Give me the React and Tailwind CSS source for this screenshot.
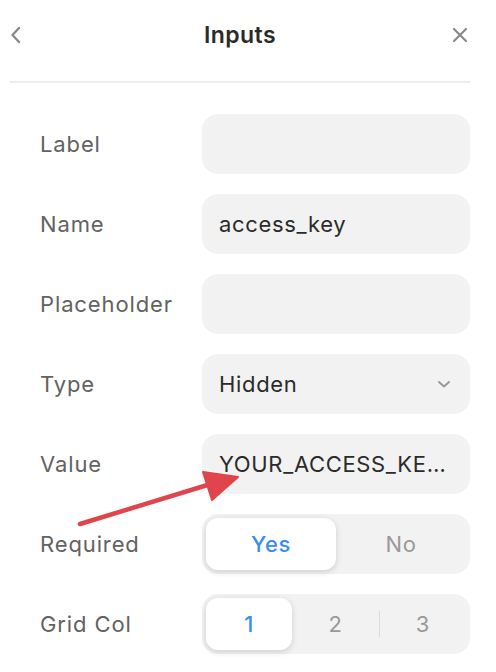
import React from 'react';

const font = { fontFamily: 'Inter, "Noto Sans", sans-serif' };

function Row({ label, children }) {
  return (
    <div className="flex items-center h-[60px]">
      <div className="w-[202px] pl-10 text-[22px] tracking-[0.04em] text-[#626262]">{label}</div>
      <div className="w-[268px]">{children}</div>
    </div>
  );
}

function Field({ value, chevron }) {
  return (
    <div className="h-[60px] rounded-[16px] bg-[#f2f2f2] flex items-center pl-[17px] pr-[18px] text-[22px] tracking-[0.03em] text-[#2b2b2b]">
      <span className="flex-1 truncate">{value}</span>
      {chevron && (
        <svg width="16" height="16" viewBox="0 0 16 16" fill="none" stroke="#999" strokeWidth="2" strokeLinecap="round" strokeLinejoin="round">
          <path d="M3 6l5 4.5L13 6" />
        </svg>
      )}
    </div>
  );
}

function Segmented({ options, active, dividers }) {
  return (
    <div className="h-[60px] rounded-[16px] bg-[#f2f2f2] p-1 flex items-center">
      {options.map((o, i) => (
        <React.Fragment key={o}>
          {dividers && i > 0 && i !== active && i - 1 !== active && (
            <div className="w-px h-[26px] bg-[#dcdcdc]" />
          )}
          <div
            className={
              'flex-1 h-[52px] rounded-[12px] flex items-center justify-center text-[22px] tracking-[0.03em] ' +
              (i === active
                ? 'bg-white text-[#3b8ef0] font-medium shadow-[0_2px_6px_rgba(0,0,0,0.15)]'
                : 'text-[#999]')
            }
          >
            {o}
          </div>
        </React.Fragment>
      ))}
    </div>
  );
}

export default function App() {
  return (
    <div className="relative w-[496px] h-[672px] bg-white overflow-hidden" style={font}>
      <header className="flex items-center justify-between h-[70px] pl-[10px] pr-[28px]">
        <svg width="12" height="18" viewBox="0 0 12 18" fill="none" stroke="#8a8a8a" strokeWidth="2.4" strokeLinecap="round" strokeLinejoin="round">
          <path d="M9 2L2.5 9L9 16" />
        </svg>
        <h1 className="text-[23px] font-semibold tracking-[0.02em] text-[#2b2b2b] ml-[6px]">Inputs</h1>
        <svg width="16" height="16" viewBox="0 0 16 16" fill="none" stroke="#8a8a8a" strokeWidth="2.2" strokeLinecap="round">
          <path d="M2 2L14 14M14 2L2 14" />
        </svg>
      </header>
      <div className="mx-[10px] w-[460px] h-[2px] bg-[#ececec] mt-[11px]" />
      <div className="flex flex-col gap-5 mt-[31px]">
        <Row label="Label"><Field value="" /></Row>
        <Row label="Name"><Field value="access_key" /></Row>
        <Row label="Placeholder"><Field value="" /></Row>
        <Row label="Type"><Field value="Hidden" chevron /></Row>
        <Row label="Value"><Field value="YOUR_ACCESS_KEY_HERE" /></Row>
        <Row label="Required"><Segmented options={['Yes', 'No']} active={0} /></Row>
        <Row label="Grid Col"><Segmented options={['1', '2', '3']} active={0} dividers /></Row>
      </div>
      <svg className="absolute left-0 top-0 pointer-events-none" width="496" height="672" viewBox="0 0 496 672">
        <line x1="80" y1="524" x2="214" y2="483" stroke="#e0454b" strokeWidth="4.5" strokeLinecap="round" />
        <path d="M203 472L238 477L212 500Z" fill="#e0454b" stroke="#e0454b" strokeWidth="2" strokeLinejoin="round" />
      </svg>
    </div>
  );
}
